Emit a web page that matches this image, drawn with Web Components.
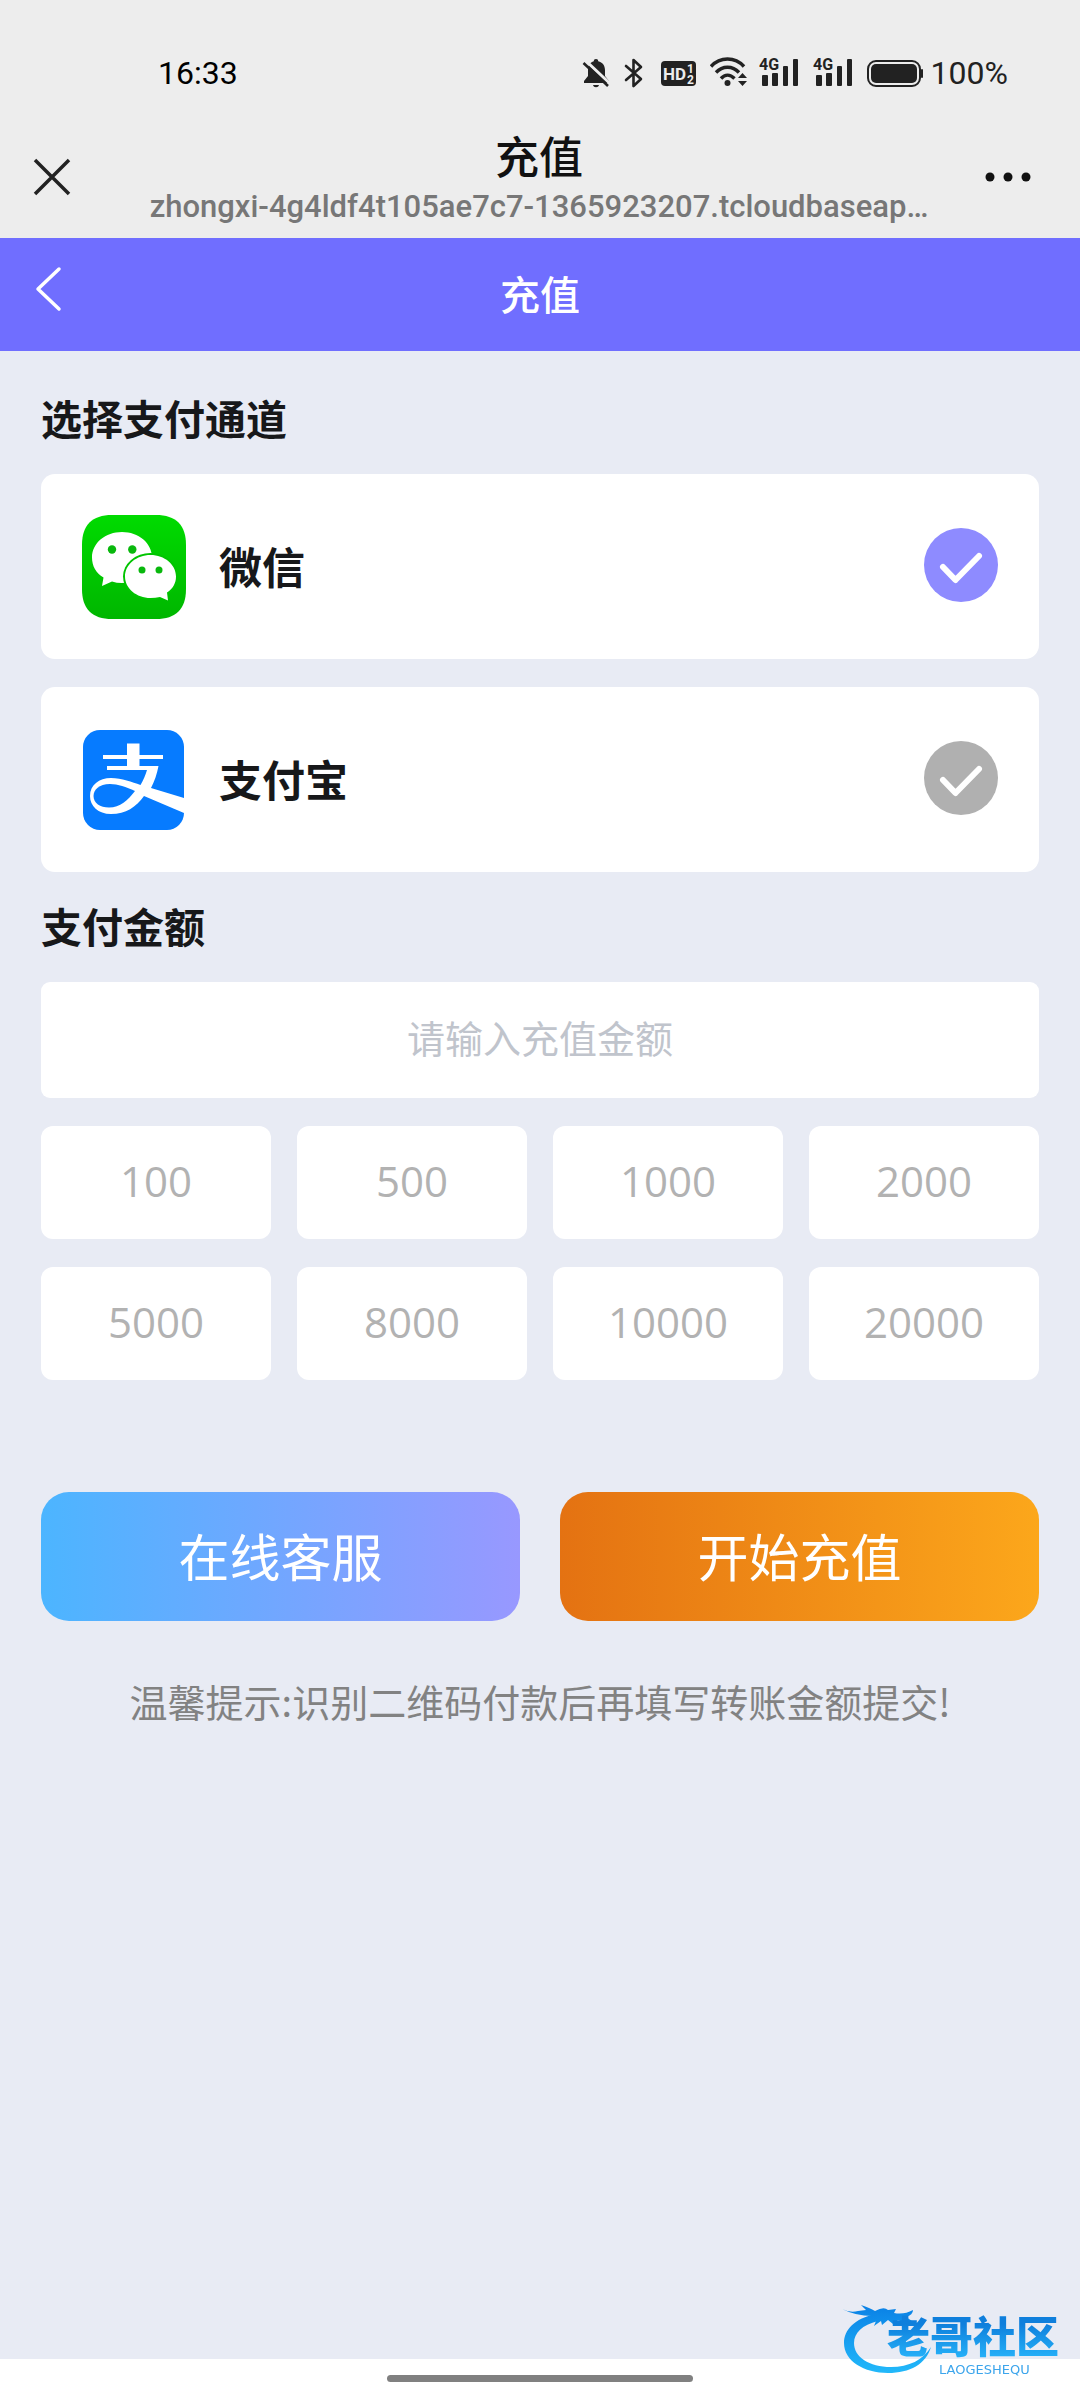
<!DOCTYPE html>
<html lang="zh-CN">
<head>
<meta charset="utf-8">
<meta name="viewport" content="width=device-width, initial-scale=1">
<title>充值</title>
<style>
  html, body { margin: 0; }
  body {
    min-height: 100vh;
    display: flex;
    flex-direction: column;
    background: #e8ebf4;
    color: #17181a;
    font-family: Roboto, "Noto Sans CJK SC", sans-serif;
  }
  recharge-form { flex: 1; }
</style>
</head>
<body>
<status-bar time="16:33" battery="100%"></status-bar>
<browser-bar>
  <span slot="title">充值</span>
  <span slot="url">zhongxi-4g4ldf4t105ae7c7-1365923207.tcloudbaseap…</span>
</browser-bar>
<nav-bar>充值</nav-bar>
<recharge-form></recharge-form>
<home-indicator></home-indicator>
<site-watermark></site-watermark>

<script>
const define = (name, html, setup) => {
  const template = document.createElement('template');
  template.innerHTML = html;
  customElements.define(name, class extends HTMLElement {
    constructor() {
      super();
      this.attachShadow({ mode: 'open' }).append(template.content.cloneNode(true));
    }
    connectedCallback() { if (setup) setup(this, this.shadowRoot); }
  });
};

define('signal-icon', `
  <style>:host{display:block} svg{display:block}</style>
  <svg width="42" height="40" viewBox="0 -4 42 40" fill="#222">
    <rect x="3" y="18" width="6" height="11" rx="1"/>
    <rect x="13" y="16" width="6" height="13" rx="1"/>
    <rect x="24" y="9" width="5" height="20" rx="1"/>
    <rect x="34" y="2" width="5" height="27" rx="1"/>
    <text x="0" y="13" font-family="Roboto, sans-serif" font-size="16" font-weight="700" stroke="#ededed" stroke-width="2" paint-order="stroke">4G</text>
  </svg>`);

define('status-bar', `
  <style>
    :host{display:flex;align-items:center;height:115px;box-sizing:border-box;padding:31px 72px 0 158px;background:#ededed}
    .time,.battery{font-size:32px;line-height:38px;color:#000}
    .battery{color:#222}
    .group,.icons{display:flex;align-items:center}
    .group{gap:8px;margin-left:auto}
    .icons{gap:12px}
    svg{display:block}
  </style>
  <span class="time"></span>
  <div class="group">
    <div class="icons">
      <svg width="29" height="32" viewBox="0 0 29 32" fill="#222" aria-label="静音">
        <path d="M14 2c1.500 0 2.200.9 2.200 2.200C20.500 5.200 23 8.600 23 13v6l4 5v2H2v-2l4-5v-6c0-4.400 2-7.800 5.800-8.800C11.800 2.900 12.500 2 14 2z"/>
        <path d="M11 28h6c-.4 1.500-1.500 2.200-3 2.200S11.400 29.500 11 28z"/>
        <path d="M4 4L29 27.500" stroke="#ededed" stroke-width="3"/>
        <path d="M1.500 6L26 29" stroke="#222" stroke-width="2.600"/>
      </svg>
      <svg width="23" height="32" viewBox="0 0 23 32" fill="none" stroke="#222" stroke-width="2.600" stroke-linejoin="round" stroke-linecap="round" aria-label="蓝牙">
        <path d="M3 9L18 22L10.500 29V3L18 10L3 23"/>
      </svg>
      <svg width="40" height="32" viewBox="0 0 40 32" aria-label="HD">
        <rect x="3" y="4" width="35" height="25" rx="4" fill="#222"/>
        <g fill="#ededed" font-family="Roboto, sans-serif" font-weight="700">
          <text x="5" y="23" font-size="17">HD</text>
          <text x="29" y="16" font-size="12">1</text>
          <text x="29" y="27" font-size="12">2</text>
        </g>
      </svg>
      <svg width="37" height="32" viewBox="0 0 37 32" fill="none" stroke="#222" stroke-width="3.400" aria-label="无线网络">
        <path d="M1 9.500C10-.5 25-.5 34 9.500"/>
        <path d="M6 15.500C12.500 8.500 22.500 8.500 29 15.500"/>
        <path d="M11 21.500C15 17 20 17 24.500 21.500"/>
        <circle cx="17.500" cy="26" r="3" fill="#222" stroke="none"/>
        <path d="M28 21h9l-4.500-5zM28 24h9l-4.500 5z" fill="#222" stroke="none"/>
      </svg>
      <signal-icon></signal-icon>
      <signal-icon></signal-icon>
      <svg width="56" height="32" viewBox="0 0 56 32" aria-label="电池">
        <rect x="1" y="4" width="52" height="25" rx="8" fill="none" stroke="#222" stroke-width="2"/>
        <rect x="4" y="7" width="46" height="19" rx="5" fill="#222"/>
        <rect x="54" y="12" width="2" height="9" rx="1" fill="#222"/>
      </svg>
    </div>
    <span class="battery"></span>
  </div>`,
  (host, root) => {
    root.querySelector('.time').textContent = host.getAttribute('time');
    root.querySelector('.battery').textContent = host.getAttribute('battery');
  });

define('browser-bar', `
  <style>
    :host{display:flex;align-items:center;height:123px;box-sizing:border-box;padding:0 44px 0 32px;background:#ededed}
    button{width:40px;height:40px;padding:0;border:0;background:none;flex:none}
    button:last-child{width:60px}
    svg{display:block}
    .text{flex:1;min-width:0;text-align:center;padding:8px 12px 0 42px}
    .title{font-size:44px;line-height:52px;font-weight:500;color:#111}
    .url{font-size:31px;line-height:44px;font-weight:500;color:#777;white-space:nowrap}
  </style>
  <button type="button" aria-label="关闭"><svg width="40" height="40" viewBox="0 0 40 40"><path d="M3 3L37 37M37 3L3 37" stroke="#222" stroke-width="3.500"/></svg></button>
  <div class="text">
    <div class="title"><slot name="title"></slot></div>
    <div class="url"><slot name="url"></slot></div>
  </div>
  <button type="button" aria-label="更多"><svg width="60" height="40" viewBox="0 0 60 40" fill="#111"><circle cx="14" cy="20" r="4.500"/><circle cx="32" cy="20" r="4.500"/><circle cx="50" cy="20" r="4.500"/></svg></button>`);

define('nav-bar', `
  <style>
    :host{display:grid;grid-template-columns:1fr auto 1fr;align-items:center;height:113px;padding:0 32px;background:#706eff;color:#fff}
    button{width:34px;padding:0 0 12px;border:0;background:none}
    svg{display:block}
    h1{margin:0;padding-top:4px;font-size:40px;line-height:56px;font-weight:500}
  </style>
  <button type="button" aria-label="返回"><svg width="34" height="48" viewBox="0 0 34 48"><path d="M27 4L6 24L27 44" fill="none" stroke="#fff" stroke-width="3.500" stroke-linecap="round" stroke-linejoin="round"/></svg></button>
  <h1><slot></slot></h1>`);

define('section-title', `
  <style>
    :host{display:block}
    h2{margin:0;font-size:41px;line-height:60px;font-weight:700}
  </style>
  <h2><slot></slot></h2>`);

define('wechat-logo', `
  <style>:host{display:block} svg{display:block}</style>
  <svg width="104" height="104" viewBox="0 0 104 104">
    <defs><linearGradient id="g" x2="0" y2="1"><stop stop-color="#00db00"/><stop offset="1" stop-color="#00b600"/></linearGradient></defs>
    <path d="M30 0H74C94 0 104 10 104 30V74C104 94 94 104 74 104H30C10 104 0 94 0 74V30C0 10 10 0 30 0z" fill="url(#g)"/>
    <path d="M40 17C56.500 17 70 28 70 42.500S56.500 68 40 68Q34.500 68 30 66.500L20 71L21.500 62.500C14 58 10 51 10 42.500C10 28 23.500 17 40 17z" fill="#fff"/>
    <ellipse cx="68.500" cy="61.500" rx="27.500" ry="23.500" fill="#00c400"/>
    <path d="M68.500 40C82.500 40 94 49.500 94 61.500C94 68 91 73.500 85 77.500L86 85.500L78 82Q73.500 83 68.500 83C54.500 83 43 73.500 43 61.500S54.500 40 68.500 40z" fill="#fff"/>
    <g fill="#09b80d"><circle cx="30" cy="34.500" r="4.200"/><circle cx="50.300" cy="34.500" r="4.200"/><circle cx="60" cy="55" r="3.500"/><circle cx="77" cy="55" r="3.500"/></g>
  </svg>`);

define('alipay-logo', `
  <style>:host{display:block} svg{display:block}</style>
  <svg width="104" height="104" viewBox="0 0 104 104">
    <rect x="1" y="2" width="101" height="100" rx="17" fill="#067bff"/>
    <g fill="#fff">
      <path d="M45 15.500H57.500V27H81V31H57.500V38H76.500C75 46 72.500 53 69 60L102 70V85L62 68C54 79 44 86 29 86C16 86 8 78 8 68C8 57 17 50 29 50C40 50 50 54 58.500 57C61.500 52 63.500 47 65 42H25V38H45V31H21V27H45z"/>
      <path d="M53 63C44 59 36 56 28 56C17 56 11.500 62 11.500 68C11.500 75 18 79.500 27 79.500C38 79.500 46 72 53 63z" fill="#067bff"/>
    </g>
  </svg>`);

define('payment-channels', `
  <style>
    :host{display:grid;gap:28px}
    label{display:flex;align-items:center;height:185px;box-sizing:border-box;padding:0 41px;background:#fff;border-radius:14px;cursor:pointer}
    .name{flex:1;padding:4px 0 0 33px;font-size:43px;line-height:60px;font-weight:700}
    .mark{display:grid;padding-bottom:3px}
    .mark > *{grid-area:1/1}
    input{appearance:none;width:74px;height:74px;margin:0;border-radius:50%;background:#b0b0b0}
    input:checked{background:#8e8bff}
    svg{pointer-events:none}
  </style>
  <label><wechat-logo></wechat-logo><span class="name">微信</span>
    <span class="mark"><input type="radio" name="channel" value="wechat" checked><svg width="74" height="74" viewBox="0 0 74 74"><path d="M19 39L31.500 52L55 28" fill="none" stroke="#fff" stroke-width="6" stroke-linecap="round" stroke-linejoin="round"/></svg></span></label>
  <label><alipay-logo></alipay-logo><span class="name">支付宝</span>
    <span class="mark"><input type="radio" name="channel" value="alipay"><svg width="74" height="74" viewBox="0 0 74 74"><path d="M19 39L31.500 52L55 28" fill="none" stroke="#fff" stroke-width="6" stroke-linecap="round" stroke-linejoin="round"/></svg></span></label>`);

define('amount-option', `
  <style>
    :host{display:block}
    button{display:block;width:100%;height:113px;padding:0 0 4px;border:0;border-radius:12px;background:#fff;color:#b2b2b2;font:400 42px/60px "Open Sans", Roboto, sans-serif}
  </style>
  <button type="button"><slot></slot></button>`);

define('action-button', `
  <style>
    :host{display:block}
    button{display:block;width:100%;height:129px;padding:6px 0 0;border:0;border-radius:28px;color:#fff;font-family:inherit;font-size:51px;line-height:72px;background:linear-gradient(90deg,#4cb5ff,#9898ff)}
    :host([kind=primary]) button{background:linear-gradient(90deg,#e47212,#fca71b)}
  </style>
  <button type="button"><slot></slot></button>`);

define('recharge-form', `
  <style>
    :host{display:block;padding:40px 41px 0}
    payment-channels{margin:23px 0 27px}
    .amount{display:block;width:100%;height:116px;box-sizing:border-box;margin:23px 0 28px;padding:0;border:0;border-radius:9px;background:#fff;text-align:center;color:#333;font-family:inherit;font-size:38px}
    .amount::placeholder{color:#c0c4cc;opacity:1}
    .presets{display:grid;grid-template-columns:repeat(4,1fr);gap:28px 26px}
    .actions{display:grid;grid-template-columns:1fr 1fr;gap:40px;margin-top:112px}
    p{margin:52px 0 0;text-align:center;font-family:"Noto Sans CJK SC",sans-serif;font-size:38px;line-height:56px;color:#828282}
  </style>
  <section-title>选择支付通道</section-title>
  <payment-channels></payment-channels>
  <section-title>支付金额</section-title>
  <input class="amount" type="text" inputmode="decimal" placeholder="请输入充值金额" aria-label="支付金额">
  <div class="presets">
    <amount-option>100</amount-option><amount-option>500</amount-option><amount-option>1000</amount-option><amount-option>2000</amount-option>
    <amount-option>5000</amount-option><amount-option>8000</amount-option><amount-option>10000</amount-option><amount-option>20000</amount-option>
  </div>
  <div class="actions">
    <action-button>在线客服</action-button>
    <action-button kind="primary">开始充值</action-button>
  </div>
  <p>温馨提示:识别二维码付款后再填写转账金额提交!</p>`,
  (host, root) => {
    const input = root.querySelector('.amount');
    root.querySelector('.presets').addEventListener('click', e => {
      const option = e.target.closest('amount-option');
      if (option) input.value = option.textContent;
    });
  });

define('home-indicator', `
  <style>
    :host{display:flex;justify-content:center;height:41px;background:#fff}
    div{width:306px;height:7px;margin-top:16px;border-radius:4px;background:#808080}
  </style>
  <div></div>`);

define('site-watermark', `
  <style>:host{position:fixed;right:14px;bottom:22px;pointer-events:none} svg{display:block}</style>
  <svg width="224" height="74" viewBox="0 0 224 74">
    <defs>
      <linearGradient id="w" gradientUnits="userSpaceOnUse" x1="0" y1="4" x2="0" y2="68"><stop stop-color="#0b83e6"/><stop offset="1" stop-color="#22b8fa"/></linearGradient>
      <linearGradient id="t" gradientUnits="userSpaceOnUse" x1="0" y1="20" x2="0" y2="56"><stop stop-color="#0f7fdc"/><stop offset="1" stop-color="#27b4fa"/></linearGradient>
    </defs>
    <g fill="url(#w)">
      <path d="M33 10C12 15 2 26 2 39C2 57 22 69 46 69C68 69 84 60 89 43C81 56 67 63 49 63C27 63 12 53 12 39C12 29 20 21 36 17z"/>
      <path d="M0 5Q8 9 16 7L24 6L19 1Q28 4 33 7Q42 2 46 6L54 5L52 9Q62 11 71 6Q71 11 64 13L70 17L66 20L56 16L51 20L46 16L40 21L39 17L32 22L34 17L24 18L30 12Q14 12 0 5z"/>
    </g>
    <text x="45" y="49" font-family="Noto Sans CJK SC, sans-serif" font-size="43" font-weight="900" fill="url(#t)">老哥社区</text>
    <text x="97" y="70" font-family="DejaVu Sans, sans-serif" font-size="13" fill="#3ca5ec">LAOGESHEQU</text>
  </svg>`);
</script>
</body>
</html>
